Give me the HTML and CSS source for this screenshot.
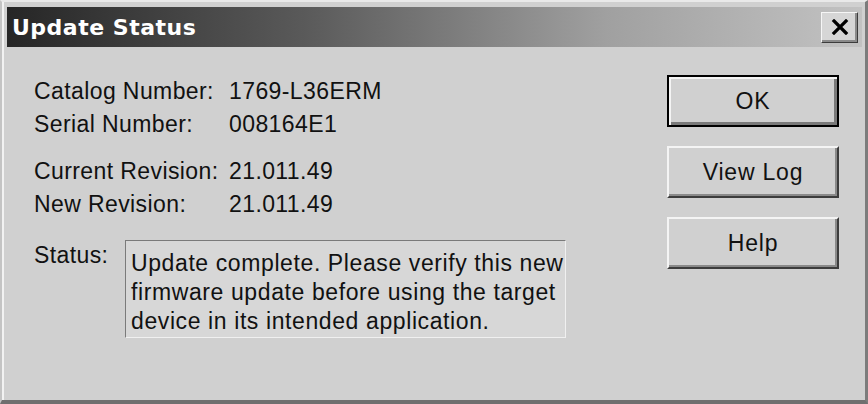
FILE: index.html
```html
<!DOCTYPE html>
<html>
<head>
    <title>Update Status</title>
    <link rel="stylesheet" href="styles.css">
</head>
<body>
    <div class="dialog">
        <div class="titlebar">
            <span class="title">Update Status</span>
            <button class="close-btn" aria-label="Close">
                <svg width="18" height="16" viewBox="0 0 18 16">
                    <path d="M3 2 L15 14 M15 2 L3 14" stroke="#000" stroke-width="3.2" stroke-linecap="square"/>
                </svg>
            </button>
        </div>
        <div class="dialog-body">
            <div class="info">
                <div class="info-group">
                    <span class="label">Catalog Number:</span><span class="value">1769-L36ERM</span>
                    <span class="label">Serial Number:</span><span class="value">008164E1</span>
                </div>
                <div class="info-group">
                    <span class="label">Current Revision:</span><span class="value">21.011.49</span>
                    <span class="label">New Revision:</span><span class="value">21.011.49</span>
                </div>
                <div class="status-row">
                    <span class="status-label">Status:</span>
                    <div class="status-box">Update complete. Please verify this new<br>firmware update before using the target<br>device in its intended application.</div>
                </div>
            </div>
            <div class="actions">
                <button class="btn btn-default">OK</button>
                <button class="btn">View Log</button>
                <button class="btn">Help</button>
            </div>
        </div>
    </div>
</body>
</html>
```

FILE: styles.css
```css
body {
    margin: 0;
    width: 868px;
    height: 404px;
    overflow: hidden;
    background-color: #d0d0d0;
    font-family: 'Liberation Sans', Arial, sans-serif;
    color: #111;
}

.dialog {
    box-sizing: border-box;
    width: 868px;
    height: 404px;
    border-top: 2px solid #e9e9e9;
    border-left: 2px solid #c4c4c4;
    border-right: 3px solid #7c7c7c;
    border-bottom: 4px solid #6f6f6f;
    box-shadow: inset 2px 0 #f2f2f2;
    padding: 5px 3px 0 5px;
    background-color: #d0d0d0;
}

.titlebar {
    height: 40px;
    display: flex;
    align-items: center;
    justify-content: space-between;
    padding: 0 4px 0 5px;
    background: linear-gradient(to right, #262626 0%, #5a5a5a 35%, #a0a0a0 70%, #c2c2c2 100%);
}

.title {
    font-family: 'DejaVu Sans', Verdana, sans-serif;
    font-weight: bold;
    font-size: 22px;
    color: #fff;
    letter-spacing: 0.5px;
}

.close-btn {
    box-sizing: border-box;
    width: 37px;
    height: 31px;
    padding: 0;
    display: flex;
    align-items: center;
    justify-content: center;
    background-color: #d6d6d6;
    border: 1px solid;
    border-color: #f6f6f6 #3c3c3c #3c3c3c #f6f6f6;
    box-shadow: inset -2px -2px #8a8a8a;
}

.dialog-body {
    display: flex;
    justify-content: space-between;
    padding: 0 23px 0 27px;
}

.info {
    padding-top: 28px;
    font-size: 23px;
    letter-spacing: 0.4px;
}

.info-group {
    display: grid;
    grid-template-columns: 195px auto;
    line-height: 33px;
    margin-bottom: 14px;
}

.status-row {
    display: flex;
    margin-top: 19px;
}

.status-label {
    width: 91px;
    line-height: 30px;
}

.status-box {
    box-sizing: border-box;
    width: 441px;
    height: 98px;
    padding: 8px 0 0 5px;
    line-height: 29px;
    background-color: #d7d7d7;
    border: 1px solid;
    border-color: #7a7a7a #f0f0f0 #f0f0f0 #7a7a7a;
    white-space: nowrap;
    letter-spacing: 0.6px;
}

.actions {
    display: flex;
    flex-direction: column;
    gap: 19px;
    padding-top: 28px;
}

.btn {
    box-sizing: border-box;
    width: 172px;
    height: 52px;
    font-family: 'Liberation Sans', Arial, sans-serif;
    font-size: 23px;
    letter-spacing: 0.8px;
    color: #111;
    background-color: #d0d0d0;
    border: 2px solid;
    border-color: #f4f4f4 #3c3c3c #3c3c3c #f4f4f4;
    box-shadow: inset -2px -2px #8a8a8a;
    padding: 0;
}

.btn-default {
    border: 2px solid #000;
    box-shadow: inset 2px 2px #f4f4f4, inset -3px -3px #7a7a7a;
}
```
